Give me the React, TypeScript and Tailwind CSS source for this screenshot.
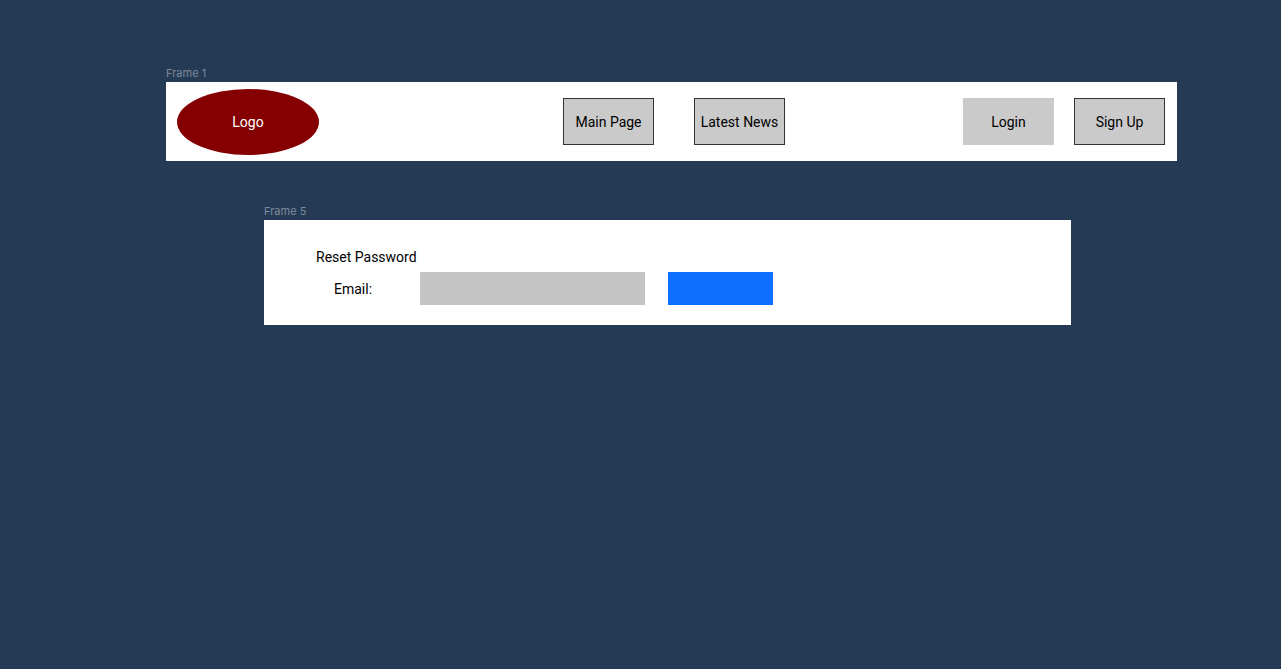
export default function App() {
  const box = "flex h-[47px] w-[91px] items-center justify-center whitespace-nowrap bg-[#cacaca] text-sm text-black";
  return (
    <main className="min-h-screen bg-[#243a55] pt-16 font-['Roboto',sans-serif] text-sm text-black">
      <section className="ml-[166px] mr-[104px]">
        <h2 className="h-[18px] font-['Inter',sans-serif] text-[11px] leading-[18px] text-[#7f8b9b]">Frame 1</h2>
        <header className="flex h-[79px] items-center bg-white pl-[11px] pr-3">
          <a href="#home" className="flex h-[66px] w-[142px] items-center justify-center rounded-[50%] bg-[#850000] text-white">Logo</a>
          <nav className="ml-[244px] flex gap-10">
            <a href="#main" className={`${box} border border-[#333333]`}>Main Page</a>
            <a href="#news" className={`${box} border border-[#333333]`}>Latest News</a>
          </nav>
          <div className="ml-auto flex gap-5">
            <button type="button" className={box}>Login</button>
            <button type="button" className={`${box} border border-[#333333]`}>Sign Up</button>
          </div>
        </header>
      </section>
      <section className="ml-[264px] mr-[210px] mt-[41px]">
        <h2 className="h-[18px] font-['Inter',sans-serif] text-[11px] leading-[18px] text-[#7f8b9b]">Frame 5</h2>
        <form className="h-[105px] bg-white pl-[52px] pt-7" onSubmit={(e) => e.preventDefault()}>
          <h1 className="h-6 leading-[18px]">Reset Password</h1>
          <div className="flex h-[33px] items-center">
            <label htmlFor="email" className="ml-[18px] w-[86px]">Email:</label>
            <input id="email" type="email" className="h-[33px] w-[225px] bg-[#c4c4c4] px-2 outline-none" />
            <button type="submit" aria-label="Reset Password" className="ml-[23px] h-[33px] w-[105px] bg-[#0d6eff]" />
          </div>
        </form>
      </section>
    </main>
  );
}
